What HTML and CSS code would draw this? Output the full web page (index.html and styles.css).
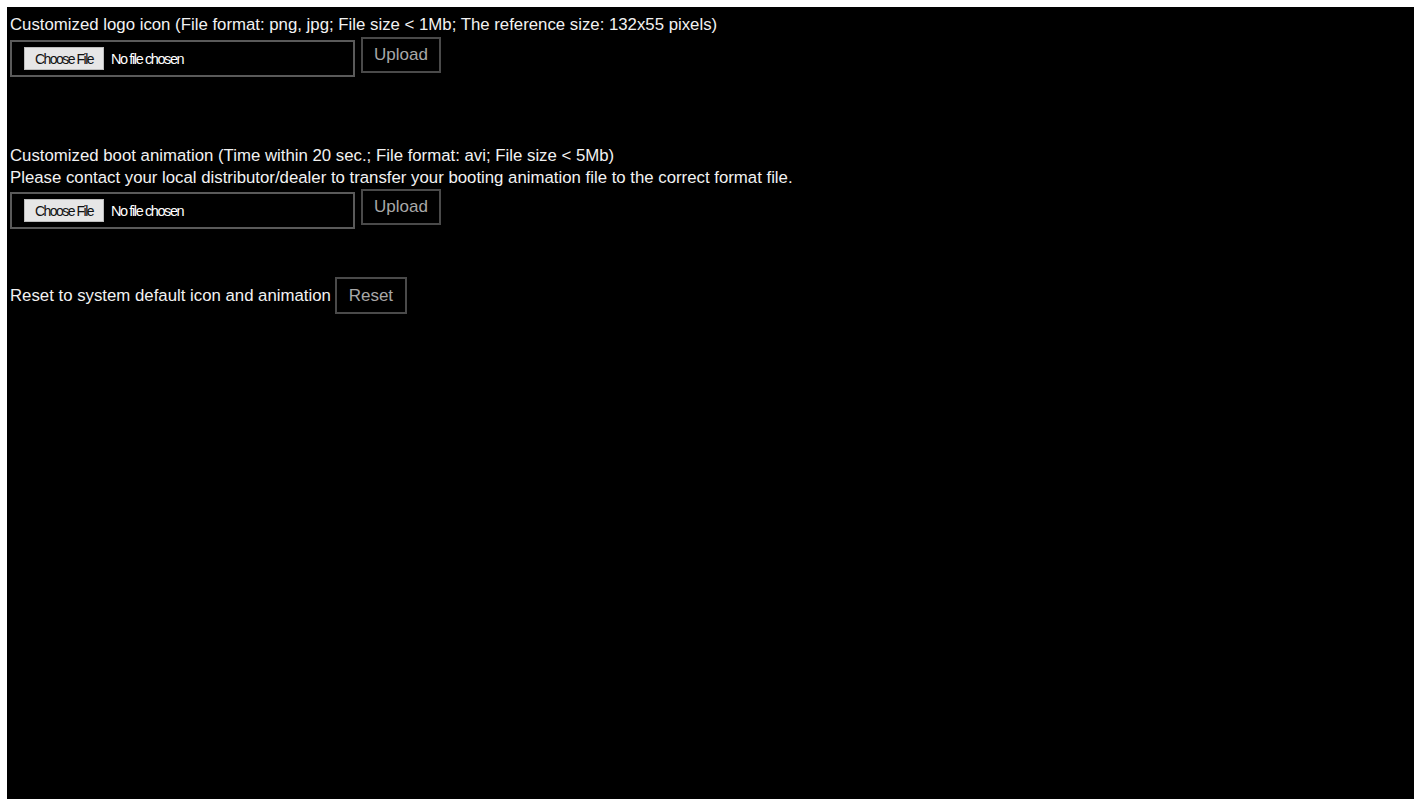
FILE: index.html
```html
<!DOCTYPE html>
<html lang="en">
<head>
    <meta charset="UTF-8">
    <meta name="viewport" content="width=device-width, initial-scale=1.0">
    <title>Customized Logo and Boot Animation</title>
    <link rel="stylesheet" href="styles.css">
</head>
<body>
    <div class="panel">
        <div class="section logo-section">
            <div class="label">Customized logo icon (File format: png, jpg; File size &lt; 1Mb; The reference size: 132x55 pixels)</div>
            <div class="upload-row">
                <div class="file-box">
                    <span class="choose-btn">Choose File</span>
                    <span class="file-name">No file chosen</span>
                </div>
                <div class="action-btn">Upload</div>
            </div>
        </div>

        <div class="section boot-section">
            <div class="label">Customized boot animation (Time within 20 sec.; File format: avi; File size &lt; 5Mb)</div>
            <div class="label">Please contact your local distributor/dealer to transfer your booting animation file to the correct format file.</div>
            <div class="upload-row">
                <div class="file-box">
                    <span class="choose-btn">Choose File</span>
                    <span class="file-name">No file chosen</span>
                </div>
                <div class="action-btn">Upload</div>
            </div>
        </div>

        <div class="section reset-section">
            <div class="reset-row">
                <span class="label">Reset to system default icon and animation</span>
                <div class="action-btn reset-btn">Reset</div>
            </div>
        </div>
    </div>
</body>
</html>
```

FILE: styles.css
```css
body {
    margin: 0;
    background-color: #fff;
    font-family: "Liberation Sans", Arial, sans-serif;
}

.panel {
    width: 1407px;
    height: 792px;
    margin: 7px 0 0 7px;
    padding: 7px 0 0 3px;
    box-sizing: border-box;
    background-color: #000;
    color: #f2f2f2;
}

.label {
    font-size: 16.8px;
    line-height: 22px;
}

.upload-row {
    display: flex;
    align-items: flex-start;
    gap: 6px;
    margin-top: 1px;
}

.file-box {
    width: 345px;
    height: 37px;
    margin-top: 3px;
    box-sizing: border-box;
    border: 2px solid #5a5a5a;
    display: flex;
    align-items: center;
    padding-left: 12px;
    gap: 7px;
}

.choose-btn {
    width: 80px;
    height: 23px;
    background-color: #e6e6e6;
    border: 1px solid #bdbdbd;
    box-sizing: border-box;
    color: #111;
    font-size: 14px;
    letter-spacing: -1.5px;
    display: flex;
    align-items: center;
    justify-content: center;
}

.file-name {
    font-size: 14.5px;
    letter-spacing: -1.4px;
    color: #fff;
}

.action-btn {
    width: 80px;
    height: 36px;
    box-sizing: border-box;
    border: 2px solid #4a4a4a;
    color: #a8a8a8;
    font-size: 17px;
    display: flex;
    align-items: center;
    justify-content: center;
}

.boot-section {
    margin-top: 68px;
}

.boot-section .upload-row {
    margin-top: 0;
}

.reset-section {
    margin-top: 48px;
}

.reset-row {
    display: flex;
    align-items: center;
    gap: 4px;
}

.reset-btn {
    width: 72px;
    height: 37px;
}
```
